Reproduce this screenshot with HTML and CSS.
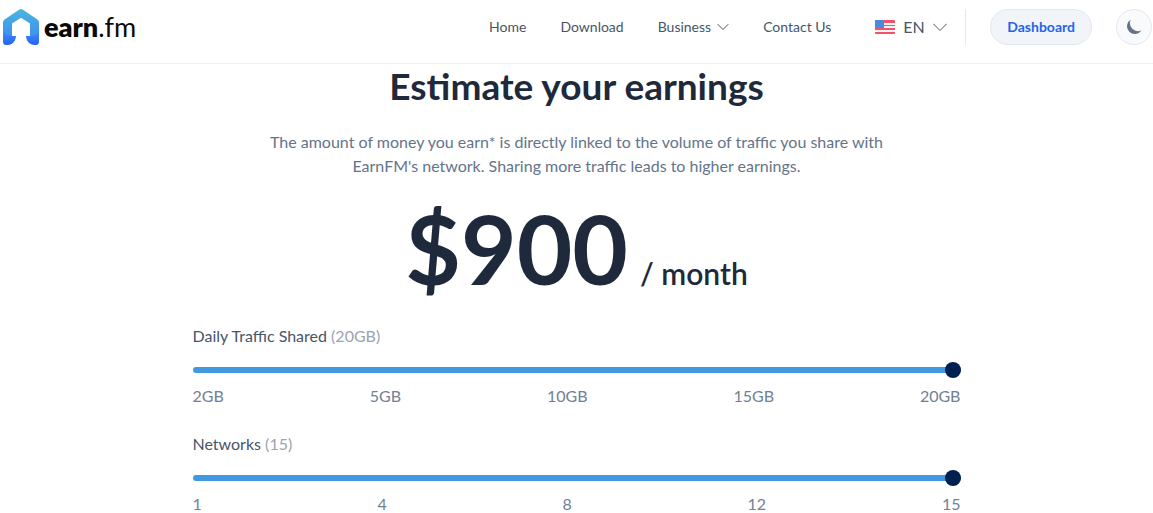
FILE: index.html
```html
<!DOCTYPE html>
<html lang="en">
<head>
    <meta charset="UTF-8">
    <meta name="viewport" content="width=device-width, initial-scale=1.0">
    <title>Earn.fm</title>
    <link rel="stylesheet" href="styles.css">
</head>
<body>
    <header class="header">
        <div class="header-inner">
            <a class="logo" href="#">
                <svg class="logo-mark" width="36" height="36" viewBox="0 0 36 36" aria-hidden="true">
                    <defs>
                        <linearGradient id="roof" x1="0" y1="0" x2="0" y2="1">
                            <stop offset="0" stop-color="#4ab4e0"/>
                            <stop offset="1" stop-color="#3a86f5"/>
                        </linearGradient>
                        <linearGradient id="foot" x1="0" y1="0" x2="0" y2="1">
                            <stop offset="0" stop-color="#3d93f8"/>
                            <stop offset="1" stop-color="#2b5ef8"/>
                        </linearGradient>
                    </defs>
                    <path fill="url(#roof)" d="M16 .8Q18 -.6 20 .8L34.400 10.500Q36 11.700 36 13.500V32Q36 36 32 36Q24 35 23 27H27V14.500L18 8.800L9 14.500V27H13Q12 35 4 36Q0 36 0 32V13.500Q0 11.700 1.600 10.500Z"/>
                    <path fill="url(#foot)" d="M0 22Q3 27 9 27H13Q12 36 3.500 36Q0 36 0 32Z"/>
                    <path fill="url(#foot)" d="M36 22Q33 27 27 27H23Q24 36 32.500 36Q36 36 36 32Z"/>
                </svg>
                <span class="logo-text"><b>earn</b>.fm</span>
            </a>
            <nav class="nav">
                <a href="#">Home</a>
                <a href="#">Download</a>
                <button class="nav-menu" type="button">Business
                    <svg width="12" height="8" viewBox="0 0 12 8" aria-hidden="true"><path class="chevron" d="M1 1.500l5 5 5-5"/></svg>
                </button>
                <a href="#">Contact Us</a>
            </nav>
            <div class="lang">
                <svg width="20" height="14" viewBox="0 0 20 14" aria-hidden="true">
                    <rect width="20" height="14" rx="1" fill="#f05565"/>
                    <path fill="#f3f3f8" d="M0 3h20v2H0zM0 6h20v2H0zM0 10h20v2H0z"/>
                    <path fill="#4a8be0" d="M1 0h8v8H0V1q0-1 1-1z"/>
                </svg>
                <select class="lang-select" aria-label="Language">
                    <option>EN</option>
                </select>
                <svg class="lang-arrow" width="14" height="9" viewBox="0 0 14 9" aria-hidden="true"><path class="chevron" d="M.5 1l6.500 6.500L13.500 1"/></svg>
            </div>
            <a class="dashboard" href="#">Dashboard</a>
            <button class="theme" type="button" aria-label="Dark mode">
                <svg width="16" height="16" viewBox="0 0 16 16" aria-hidden="true"><path fill="#64748b" d="M4.800 .5A7.800 7.800 0 1 0 15.500 11.200A8 8 0 0 1 4.800 .5Z"/></svg>
            </button>
        </div>
    </header>

    <main class="calculator">
        <h1>Estimate your earnings</h1>
        <p class="intro">The amount of money you earn* is directly linked to the volume of traffic you share with EarnFM's network. Sharing more traffic leads to higher earnings.</p>
        <p class="total"><span class="amount">$900</span> <span class="period">/ month</span></p>

        <div class="field">
            <label for="traffic">Daily Traffic Shared <span class="value">(20GB)</span></label>
            <input id="traffic" type="range" min="2" max="20" value="20">
            <div class="ticks"><span>2GB</span><span>5GB</span><span>10GB</span><span>15GB</span><span>20GB</span></div>
        </div>
        <div class="field">
            <label for="networks">Networks <span class="value">(15)</span></label>
            <input id="networks" type="range" min="1" max="15" value="15">
            <div class="ticks"><span>1</span><span>4</span><span>8</span><span>12</span><span>15</span></div>
        </div>
    </main>
</body>
</html>
```
FILE: styles.css
```css
* {
    box-sizing: border-box;
}
body {
    margin: 0;
    font-family: Lato, "Liberation Sans", sans-serif;
    font-size: 16px;
    line-height: 24px;
    color: #475569;
    background-color: #fff;
}
a {
    color: inherit;
    text-decoration: none;
}
button, select {
    font: inherit;
    color: inherit;
    border: none;
    background: none;
    padding: 0;
    cursor: pointer;
}
.header {
    border-bottom: 1px solid #f1f2f4;
}
.header-inner {
    display: flex;
    align-items: center;
    padding: 9px 1px 18px 3px;
}
.logo {
    display: flex;
    align-items: center;
    gap: 5px;
    color: #0a0a0a;
}
.logo-text {
    font-size: 27px;
}
.logo-text b {
    font-weight: 800;
}
.nav {
    display: flex;
    align-items: center;
    gap: 34px;
    margin-left: auto;
    font-size: 14px;
}
.nav-menu {
    display: flex;
    align-items: center;
    gap: 6px;
}
.chevron {
    fill: none;
    stroke: #475569;
    stroke-linecap: round;
    stroke-linejoin: round;
}
.lang {
    display: flex;
    align-items: center;
    height: 36px;
    margin-left: 44px;
    padding-right: 18px;
    border-right: 1px solid #e2e8f8;
}
.lang-select {
    appearance: none;
    margin-left: 8px;
    padding-right: 22px;
    outline: none;
}
.lang-arrow {
    margin-left: -14px;
    pointer-events: none;
}
.dashboard {
    margin-left: 24px;
    padding: 5px 16px;
    border: 1px solid #e2e8f0;
    border-radius: 18px;
    background-color: #f1f5f9;
    color: #2563eb;
    font-size: 14px;
    font-weight: 700;
}
.theme {
    display: flex;
    align-items: center;
    justify-content: center;
    width: 36px;
    height: 36px;
    margin-left: 24px;
    border: 1px solid #e2e8f0;
    border-radius: 50%;
    background-color: #f8fafc;
}
.calculator {
    max-width: 768px;
    margin: 0 auto;
    padding-top: 2px;
}
h1 {
    margin: 0 0 24px;
    font-size: 37px;
    line-height: 40px;
    font-weight: 700;
    color: #1e293b;
    text-align: center;
}
.intro {
    max-width: 640px;
    margin: 0 auto 22px;
    color: #64748b;
    text-align: center;
}
.total {
    display: flex;
    align-items: baseline;
    justify-content: center;
    gap: 12px;
    margin: 0 0 28px;
    color: #1e293b;
}
.amount {
    font-size: 96px;
    line-height: 96px;
    font-weight: 700;
}
.period {
    font-size: 30px;
    font-weight: 600;
}
.field {
    margin-bottom: 24px;
}
.field:last-child {
    margin-bottom: 0;
}
.field label {
    display: block;
}
.value {
    color: #9ca3af;
}
input[type="range"] {
    appearance: none;
    display: block;
    width: 100%;
    height: 16px;
    margin: 14px 0 6px;
    background: none;
    cursor: pointer;
}
input[type="range"]::-webkit-slider-runnable-track {
    height: 6px;
    border-radius: 3px;
    background-color: #4299e1;
}
input[type="range"]::-webkit-slider-thumb {
    appearance: none;
    width: 16px;
    height: 16px;
    margin-top: -5px;
    border-radius: 50%;
    background-color: #002050;
}
.ticks {
    display: flex;
    justify-content: space-between;
    color: #718096;
}
```
